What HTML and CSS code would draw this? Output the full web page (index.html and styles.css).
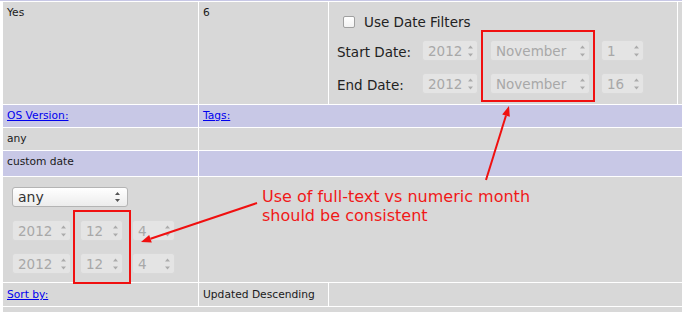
FILE: index.html
```html
<!DOCTYPE html>
<html>
<head>
<meta charset="utf-8">
<link rel="stylesheet" href="styles.css">
</head>
<body>
<div class="page">
  <div class="grid">
    <div class="strip"></div>

    <div class="c">Yes</div>
    <div class="c">6</div>
    <div class="c dates">
      <div class="check-row"><span class="check"></span><span>Use Date Filters</span></div>
      <div class="date-row">
        <span class="lbl">Start Date:</span>
        <span class="spin w-year">2012<svg class="arr" width="7" height="14" viewBox="0 0 7 14"><path d="M1 4.5 L3.5 1.5 L6 4.5Z M1 9.5 L3.5 12.5 L6 9.5Z"/></svg></span>
        <span class="spin w-month">November<svg class="arr" width="7" height="14" viewBox="0 0 7 14"><path d="M1 4.5 L3.5 1.5 L6 4.5Z M1 9.5 L3.5 12.5 L6 9.5Z"/></svg></span>
        <span class="spin w-day">1<svg class="arr" width="7" height="14" viewBox="0 0 7 14"><path d="M1 4.5 L3.5 1.5 L6 4.5Z M1 9.5 L3.5 12.5 L6 9.5Z"/></svg></span>
      </div>
      <div class="date-row">
        <span class="lbl">End Date:</span>
        <span class="spin w-year">2012<svg class="arr" width="7" height="14" viewBox="0 0 7 14"><path d="M1 4.5 L3.5 1.5 L6 4.5Z M1 9.5 L3.5 12.5 L6 9.5Z"/></svg></span>
        <span class="spin w-month">November<svg class="arr" width="7" height="14" viewBox="0 0 7 14"><path d="M1 4.5 L3.5 1.5 L6 4.5Z M1 9.5 L3.5 12.5 L6 9.5Z"/></svg></span>
        <span class="spin w-day">16<svg class="arr" width="7" height="14" viewBox="0 0 7 14"><path d="M1 4.5 L3.5 1.5 L6 4.5Z M1 9.5 L3.5 12.5 L6 9.5Z"/></svg></span>
      </div>
    </div>
    <div class="c"></div>

    <div class="c lav"><a href="#">OS Version:</a></div>
    <div class="c lav span3"><a href="#">Tags:</a></div>

    <div class="c">any</div>
    <div class="c span3"></div>

    <div class="c lav">custom date</div>
    <div class="c lav span3"></div>

    <div class="c controls">
      <div class="select">any<svg class="sarr" width="7" height="14" viewBox="0 0 7 14"><path d="M1 5 L3.5 2 L6 5Z M1 9 L3.5 12 L6 9Z"/></svg></div>
      <div class="num-row">
        <span class="spin w-lyear">2012<svg class="arr" width="7" height="14" viewBox="0 0 7 14"><path d="M1 4.5 L3.5 1.5 L6 4.5Z M1 9.5 L3.5 12.5 L6 9.5Z"/></svg></span>
        <span class="spin w-small">12<svg class="arr" width="7" height="14" viewBox="0 0 7 14"><path d="M1 4.5 L3.5 1.5 L6 4.5Z M1 9.5 L3.5 12.5 L6 9.5Z"/></svg></span>
        <span class="spin w-small">4<svg class="arr" width="7" height="14" viewBox="0 0 7 14"><path d="M1 4.5 L3.5 1.5 L6 4.5Z M1 9.5 L3.5 12.5 L6 9.5Z"/></svg></span>
      </div>
      <div class="num-row">
        <span class="spin w-lyear">2012<svg class="arr" width="7" height="14" viewBox="0 0 7 14"><path d="M1 4.5 L3.5 1.5 L6 4.5Z M1 9.5 L3.5 12.5 L6 9.5Z"/></svg></span>
        <span class="spin w-small">12<svg class="arr" width="7" height="14" viewBox="0 0 7 14"><path d="M1 4.5 L3.5 1.5 L6 4.5Z M1 9.5 L3.5 12.5 L6 9.5Z"/></svg></span>
        <span class="spin w-small">4<svg class="arr" width="7" height="14" viewBox="0 0 7 14"><path d="M1 4.5 L3.5 1.5 L6 4.5Z M1 9.5 L3.5 12.5 L6 9.5Z"/></svg></span>
      </div>
    </div>
    <div class="c span3"></div>

    <div class="c sortrow"><a href="#">Sort by:</a></div>
    <div class="c sortrow">Updated Descending</div>
    <div class="c span2"></div>

    <div class="c span4"></div>
  </div>

  <svg class="marks" width="682" height="312" viewBox="0 0 682 312">
    <rect x="482" y="31" width="112" height="70" fill="none" stroke="#f01010" stroke-width="2"/>
    <rect x="74" y="211" width="56" height="72" fill="none" stroke="#f01010" stroke-width="2"/>
    <line x1="486" y1="180" x2="506" y2="115.5" stroke="#f01010" stroke-width="2"/>
    <polygon points="509,106 509.8,116.7 502.2,114.4" fill="#f01010"/>
    <line x1="257" y1="203" x2="150.5" y2="238.8" stroke="#f01010" stroke-width="2"/>
    <polygon points="141,242 151.8,242.6 149.2,235" fill="#f01010"/>
  </svg>
  <div class="note">Use of full-text vs numeric month<br>should be consistent</div>
</div>
</body>
</html>
```

FILE: styles.css
```css
html, body {
  margin: 0;
  padding: 0;
  background: #ffffff;
  overflow: hidden;
}

.page {
  position: relative;
  width: 682px;
  height: 312px;
  overflow: hidden;
  font-family: "DejaVu Sans", Verdana, sans-serif;
  font-size: 10.7px;
  color: #1a1a1a;
}

.grid {
  margin-left: 2px;
  padding-left: 1px;
  width: 720px;
  background: #ffffff;
  display: grid;
  grid-template-columns: 195px 129px 348px 1fr;
  grid-template-rows: 1px 102px 22px 22px 25px 105px 23px 20px;
  gap: 1px;
}

.strip {
  grid-column: 1 / span 4;
  background: #c8c8e6;
  margin-left: -3px;
}

.c {
  background: #d8d8d8;
  padding: 4px 4px 0 4px;
  line-height: 14px;
}

.lav {
  background: #c8c8e6;
}

.span2 { grid-column: span 2; }
.span3 { grid-column: span 3; }
.span4 { grid-column: span 4; }

.c a {
  color: #0000ee;
  text-decoration: underline;
}

.sortrow {
  padding-top: 5px;
}

/* date filters cell */
.dates {
  padding: 12px 0 0 8px;
  font-size: 13.5px;
  color: #222;
  display: flex;
  flex-direction: column;
}

.check-row {
  display: flex;
  align-items: center;
  height: 16px;
  padding-left: 6px;
  gap: 9px;
}

.check {
  width: 10px;
  height: 10px;
  border: 1px solid #a0a0a0;
  border-radius: 2px;
  background: linear-gradient(#ffffff, #f2f2f2);
}

.date-row {
  display: flex;
  align-items: center;
  height: 21px;
  margin-top: 10px;
}

.date-row + .date-row {
  margin-top: 12px;
}

.lbl {
  width: 85px;
  padding-top: 3px;
}

.spin {
  position: relative;
  box-sizing: border-box;
  height: 21px;
  display: flex;
  align-items: center;
  padding: 1px 0 0 5px;
  background: #e4e4e4;
  border: 1px solid #d9d9d9;
  border-radius: 3px;
  color: #a8a8a8;
  font-size: 13.5px;
}

.arr {
  position: absolute;
  right: 3px;
  top: 3px;
  fill: #ababab;
}

.w-year { width: 56px; }
.w-month { width: 100px; margin-left: 12px; }
.w-day { width: 43px; margin-left: 11px; }

/* left controls */
.controls {
  padding: 10px 0 0 9px;
  display: flex;
  flex-direction: column;
}

.select {
  position: relative;
  box-sizing: border-box;
  width: 116px;
  height: 20px;
  border: 1px solid #b4b4b4;
  border-radius: 3px;
  background: linear-gradient(#ffffff, #ececec);
  font-size: 14px;
  color: #333;
  padding-left: 5px;
  display: flex;
  align-items: center;
}

.sarr {
  position: absolute;
  right: 6px;
  top: 2px;
  fill: #555;
}

.num-row {
  display: flex;
  gap: 9px;
  margin-top: 13px;
}

.num-row + .num-row {
  margin-top: 12px;
}

.w-lyear { width: 59px; }
.w-small { width: 43px; }

/* annotation overlay */
.marks {
  position: absolute;
  left: 0;
  top: 0;
}

.note {
  position: absolute;
  left: 262px;
  top: 187px;
  font-size: 16px;
  line-height: 19px;
  color: #f01818;
  white-space: nowrap;
}
```
